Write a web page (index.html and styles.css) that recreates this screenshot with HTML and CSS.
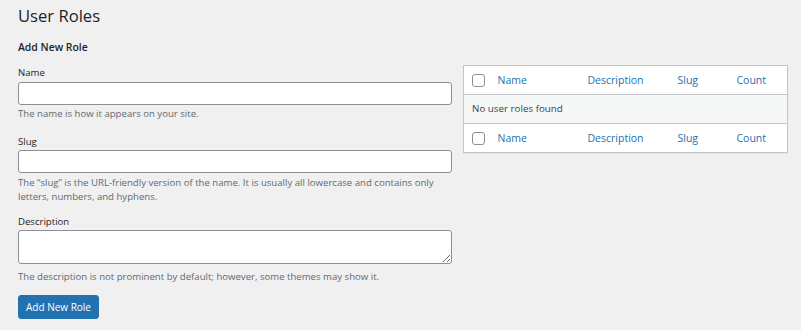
FILE: index.html
```html
<!DOCTYPE html>
<html lang="en">
<head>
<meta charset="utf-8">
<title>User Roles</title>
<link rel="stylesheet" href="styles.css">
</head>
<body>
<div class="wrap">
  <h1 class="page-title">User Roles</h1>
  <div class="cols">
    <div class="col-left">
      <h2 class="form-title">Add New Role</h2>
      <div class="field">
        <label class="label" for="role-name">Name</label>
        <input class="input" id="role-name" type="text">
        <p class="help">The name is how it appears on your site.</p>
      </div>
      <div class="field field-slug">
        <label class="label" for="role-slug">Slug</label>
        <input class="input" id="role-slug" type="text">
        <p class="help help-slug">The “slug” is the URL-friendly version of the name. It is usually all lowercase and contains only letters, numbers, and hyphens.</p>
      </div>
      <div class="field field-desc">
        <label class="label" for="role-desc">Description</label>
        <textarea class="textarea" id="role-desc"></textarea>
        <p class="help help-desc">The description is not prominent by default; however, some themes may show it.</p>
      </div>
      <button class="button-primary" type="button">Add New Role</button>
    </div>
    <div class="col-right">
      <table class="roles-table">
        <thead>
          <tr>
            <td class="cb"><span class="checkbox"></span></td>
            <th class="c-name"><a href="#">Name</a></th>
            <th class="c-desc"><a href="#">Description</a></th>
            <th class="c-slug"><a href="#">Slug</a></th>
            <th class="c-count"><a href="#">Count</a></th>
          </tr>
        </thead>
        <tbody>
          <tr class="empty">
            <td colspan="5">No user roles found</td>
          </tr>
        </tbody>
        <tfoot>
          <tr>
            <td class="cb"><span class="checkbox"></span></td>
            <th class="c-name"><a href="#">Name</a></th>
            <th class="c-desc"><a href="#">Description</a></th>
            <th class="c-slug"><a href="#">Slug</a></th>
            <th class="c-count"><a href="#">Count</a></th>
          </tr>
        </tfoot>
      </table>
    </div>
  </div>
</div>
</body>
</html>
```

FILE: styles.css
```css
* { box-sizing: border-box; }
html, body {
  margin: 0;
  padding: 0;
  background: #f0f0f1;
}
body {
  font-family: "Open Sans", "Noto Sans", sans-serif;
  font-size: 9.6px;
  line-height: 14px;
  color: #3c434a;
}
.wrap {
  padding: 3px 13px 0 18px;
}
.page-title {
  margin: 0;
  font-size: 16.6px;
  line-height: 26px;
  font-weight: 400;
  color: #1d2327;
}
.cols {
  display: grid;
  grid-template-columns: 434px 325px;
  column-gap: 11px;
  align-items: start;
}
.form-title {
  margin: 11px 0 12px;
  font-size: 10.4px;
  line-height: 14px;
  font-weight: 600;
  color: #1d2327;
}
.field {
  display: flex;
  flex-direction: column;
  margin-bottom: 14px;
}
.field-slug {
  margin-bottom: 11px;
}
.field-desc {
  margin-bottom: 0;
}
.label {
  color: #1d2327;
  margin-bottom: 2px;
}
.field-slug .label,
.field-desc .label {
  margin-bottom: 1px;
}
.input {
  height: 23px;
  width: 100%;
  border: 1px solid #8c8f94;
  border-radius: 3px;
  background: #fff;
  margin: 0;
}
.textarea {
  height: 34px;
  width: 100%;
  border: 1px solid #8c8f94;
  border-radius: 3px;
  background: #fff;
  margin: 0;
  resize: vertical;
  font: inherit;
}
.help {
  margin: 2px 0 0;
  color: #646970;
}
.help-slug {
  margin-top: 3px;
}
.help-desc {
  margin-top: 6px;
}
.button-primary {
  display: block;
  margin-top: 11px;
  height: 24px;
  padding: 0 7px;
  border: 1px solid #2271b1;
  border-radius: 3px;
  background: #2271b1;
  color: #fff;
  font: inherit;
  font-size: 10px;
  font-weight: 500;
}
.col-right {
  padding-top: 36px;
}
.roles-table {
  width: 100%;
  border-collapse: collapse;
  background: #fff;
  border: 1px solid #c3c4c7;
  table-layout: fixed;
  box-shadow: 0 1px 1px rgba(0,0,0,0.04);
}
.roles-table th,
.roles-table td {
  text-align: left;
  font-weight: 400;
  padding: 7px 8px;
  line-height: 14px;
  vertical-align: middle;
  font-size: 10.5px;
}
.roles-table thead tr { border-bottom: 1px solid #c3c4c7; }
.roles-table tfoot tr { border-top: 1px solid #c3c4c7; }
.roles-table a {
  color: #2271b1;
  text-decoration: none;
}
.roles-table .cb {
  width: 26px;
  padding: 0 0 0 8px;
}
.c-name { width: 90px; }
.c-desc { width: 90px; }
.c-slug { width: 59px; }
.checkbox {
  display: block;
  width: 13px;
  height: 13px;
  border: 1px solid #8c8f94;
  border-radius: 3px;
  background: #fff;
}
.roles-table .empty td {
  background: #f6f7f7;
  padding: 7px 8px;
  color: #3c434a;
  font-size: 9.8px;
}
```
